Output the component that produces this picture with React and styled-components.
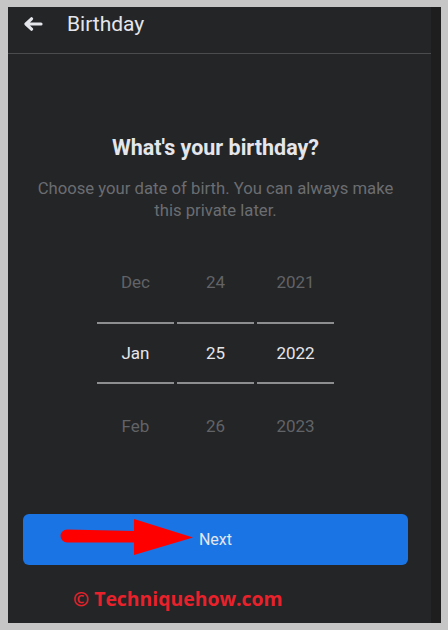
import React from 'react';
import styled, { createGlobalStyle } from 'styled-components';

const GlobalStyle = createGlobalStyle`
  html, body {
    margin: 0;
    padding: 0;
    background: #c6c6c6;
  }
  * {
    box-sizing: border-box;
  }
`;

const Frame = styled.div`
  height: 630px;
  padding: 7px 7px 7px 8px;
  display: flex;
`;

const Screen = styled.div`
  flex: 1;
  display: flex;
  background: #242527;
  font-family: Roboto, 'Liberation Sans', sans-serif;
`;

const Main = styled.div`
  flex: 1;
  display: flex;
  flex-direction: column;
`;

const Strip = styled.div`
  width: 10px;
  background: #1e1e1f;
`;

const Header = styled.div`
  display: flex;
  align-items: center;
  gap: 24px;
  height: 47px;
  padding: 0 15px 12px;
  border-bottom: 1px solid #4b4c4e;
`;

const BackButton = styled.button`
  display: flex;
  padding: 0;
  border: 0;
  background: none;
  cursor: pointer;
`;

const HeaderTitle = styled.h1`
  margin: 0;
  font-size: 21px;
  font-weight: 400;
  color: #e4e6eb;
`;

const Content = styled.div`
  display: flex;
  flex-direction: column;
  align-items: center;
  padding-right: 8px;
`;

const Title = styled.h2`
  margin: 81px 0 0;
  font-size: 21.5px;
  line-height: 26px;
  font-weight: 700;
  color: #e4e6eb;
`;

const Subtitle = styled.p`
  margin: 17px 0 0;
  max-width: 380px;
  font-size: 16.7px;
  line-height: 22px;
  text-align: center;
  color: #6b6d71;
`;

const Picker = styled.div`
  display: grid;
  grid-template-columns: repeat(3, 77px);
  column-gap: 3px;
  margin-top: 36px;
`;

const Column = styled.div`
  display: flex;
  flex-direction: column;
`;

const Item = styled.div`
  display: flex;
  align-items: center;
  justify-content: center;
  height: ${p => (p.$selected ? '62px' : '48px')};
  margin: ${p => (p.$selected ? '16px 0 18px' : '0')};
  border-top: ${p => (p.$selected ? '2px solid #8d8e90' : '0')};
  border-bottom: ${p => (p.$selected ? '2px solid #8d8e90' : '0')};
  font-size: 17px;
  color: ${p => (p.$selected ? '#e4e6eb' : '#616366')};
`;

const NextButton = styled.button`
  position: relative;
  align-self: stretch;
  height: 51px;
  margin: 64px 15px 0;
  border: 0;
  border-radius: 6px;
  background: #1b74e4;
  color: #e4e6eb;
  font-family: Roboto, 'Liberation Sans', sans-serif;
  font-size: 16px;
  font-weight: 400;
  cursor: pointer;
`;

const RedArrow = styled.svg`
  position: absolute;
  left: 36px;
  top: 3px;
`;

const Watermark = styled.div`
  align-self: flex-start;
  margin: 20px 0 0 65px;
  font-family: 'Open Sans', 'Liberation Sans', sans-serif;
  font-size: 19.4px;
  line-height: 27px;
  font-weight: 700;
  color: #e8212b;
`;

const columns = [
  ['Dec', 'Jan', 'Feb'],
  ['24', '25', '26'],
  ['2021', '2022', '2023'],
];

export default function App() {
  return (
    <>
      <GlobalStyle />
      <Frame>
        <Screen>
          <Main>
            <Header>
              <BackButton aria-label="Back">
                <svg width="20" height="14" viewBox="0 0 20 14">
                  <path
                    d="M18 7H3.5M8.5 1.8L3 7l5.5 5.2"
                    fill="none"
                    stroke="#e4e6eb"
                    strokeWidth="3.2"
                    strokeLinecap="round"
                    strokeLinejoin="round"
                  />
                </svg>
              </BackButton>
              <HeaderTitle>Birthday</HeaderTitle>
            </Header>
            <Content>
              <Title>What's your birthday?</Title>
              <Subtitle>
                Choose your date of birth. You can always make this private later.
              </Subtitle>
              <Picker>
                {columns.map((col, i) => (
                  <Column key={i}>
                    {col.map((v, j) => (
                      <Item key={v} $selected={j === 1}>
                        {v}
                      </Item>
                    ))}
                  </Column>
                ))}
              </Picker>
              <NextButton>
                Next
                <RedArrow width="140" height="40" viewBox="0 0 140 40">
                  <path
                    d="M8 12.5L76 14V25.5H8A6.5 6.5 0 0 1 8 12.5Z M75 2L134 20.5L75 38Z"
                    fill="#ff0000"
                  />
                </RedArrow>
              </NextButton>
              <Watermark>© Techniquehow.com</Watermark>
            </Content>
          </Main>
          <Strip />
        </Screen>
      </Frame>
    </>
  );
}
